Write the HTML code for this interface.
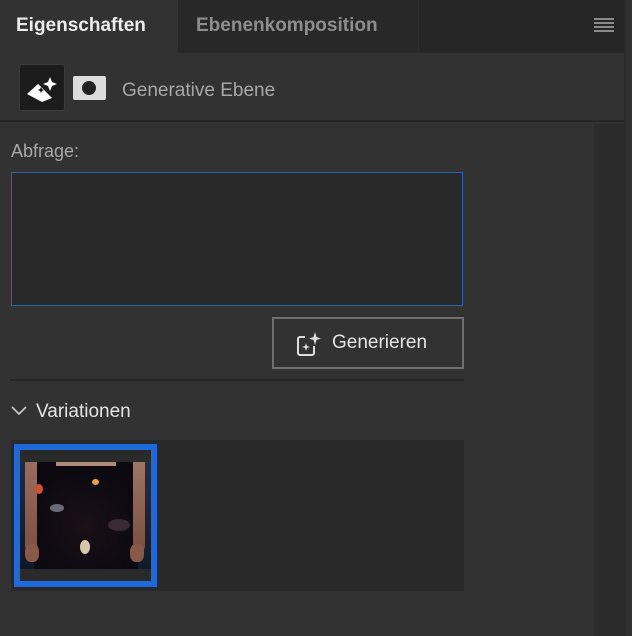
<!DOCTYPE html>
<html><head><style>
*{margin:0;padding:0;box-sizing:border-box}
body{width:632px;height:636px;background:#323232;position:relative;overflow:hidden;font-family:"Liberation Sans",sans-serif}
.a{position:absolute}
</style></head><body>
<div class="a" style="left:0;top:0;width:632px;height:53px;background:#262626"></div>
<div class="a" style="left:179px;top:0;width:239px;height:53px;background:#282828"></div>
<div class="a" style="left:0;top:0;width:178px;height:54px;background:#323232"></div>
<div class="a" style="left:16px;top:15px;font-size:19px;font-weight:bold;color:#ececec">Eigenschaften</div>
<div class="a" style="left:196px;top:15px;font-size:19px;font-weight:bold;color:#8e8e8e">Ebenenkomposition</div>
<div class="a" style="left:418px;top:0;width:1px;height:53px;background:#2e2e2e"></div>
<div class="a" style="left:594px;top:18px;width:20px;height:2px;background:#8a8a8a;box-shadow:0 4px #8a8a8a,0 8px #8a8a8a,0 12px #8a8a8a"></div>
<div class="a" style="left:19px;top:64px;width:46px;height:47px;background:#1c1c1c;border:1px solid #3c3c3c;border-radius:3px"></div>
<svg class="a" style="left:24px;top:72px" width="36" height="34" viewBox="0 0 36 34">
<path d="M3 22 L14 12 L22 20 Q16 23 18 30 Z" fill="#fff"/>
<path d="M14 12 L22 20 L28 26 L18 30" fill="#fff"/>
<path d="M26 5 L28 10 L33 12 L28 14 L26 19 L24 14 L19 12 L24 10Z" fill="#fff"/>
<path d="M17 15 L18 17 L20 18 L18 19 L17 21 L16 19 L14 18 L16 17Z" fill="#1c1c1c"/>
</svg>
<div class="a" style="left:73px;top:76px;width:33px;height:24px;background:#dcdcdc;border-radius:2px"></div>
<div class="a" style="left:82px;top:81px;width:14px;height:14px;background:#222;border-radius:50%"></div>
<div class="a" style="left:122px;top:80px;font-size:19px;color:#a8a8a8">Generative Ebene</div>
<div class="a" style="left:0;top:120px;width:632px;height:2px;background:#262626"></div>
<div class="a" style="left:594px;top:124px;width:30px;height:512px;background:#2b2b2b"></div>
<div class="a" style="left:624px;top:0;width:8px;height:636px;background:#303030;border-left:1px solid #262626"></div>
<div class="a" style="left:11px;top:141px;font-size:18px;color:#a8a8a8">Abfrage:</div>
<div class="a" style="left:11px;top:172px;width:452px;height:134px;background:#292929;border:1px solid #2d62b6"></div>
<div class="a" style="left:272px;top:317px;width:192px;height:52px;border:2px solid #707070"></div>
<svg class="a" style="left:296px;top:331px" width="26" height="26" viewBox="0 0 26 26">
<path d="M9 6 H4 a2 2 0 0 0-2 2 V22 a2 2 0 0 0 2 2 H16 a2 2 0 0 0 2-2 V15" fill="none" stroke="#ddd" stroke-width="2"/>
<path d="M19 1 L20.5 6 L25 7.5 L20.5 9 L19 14 L17.5 9 L13 7.5 L17.5 6Z" fill="#ddd"/>
<path d="M10 12 L11 15 L14 16 L11 17 L10 20 L9 17 L6 16 L9 15Z" fill="#ddd"/>
</svg>
<div class="a" style="left:332px;top:332px;font-size:19px;color:#e4e4e4">Generieren</div>
<div class="a" style="left:10px;top:379px;width:454px;height:2px;background:#262626"></div>
<svg class="a" style="left:11px;top:404px" width="16" height="12"><path d="M1 3 L8 10 L15 3" fill="none" stroke="#ccc" stroke-width="1.6"/></svg>
<div class="a" style="left:36px;top:401px;font-size:19px;color:#e4e4e4">Variationen</div>
<div class="a" style="left:11px;top:440px;width:453px;height:151px;background:#292929"></div>
<div class="a" style="left:14px;top:444px;width:143px;height:143px;border:6px solid #1d6ad8;background:#2a2a2a"></div>
<div class="a" style="left:20px;top:462px;width:131px;height:107px;background:radial-gradient(circle at 50% 60%,#1a1018,#0c0a10 60%);overflow:hidden">
<div class="a" style="left:0;top:0;width:14px;height:107px;background:linear-gradient(#1e2c44,#101828)"></div>
<div class="a" style="left:118px;top:0;width:13px;height:107px;background:linear-gradient(#20304a,#121a2a)"></div>
<div class="a" style="left:5px;top:-5px;width:12px;height:95px;background:linear-gradient(#9a7060,#7a5040);border-radius:6px"></div>
<div class="a" style="left:113px;top:-5px;width:12px;height:95px;background:linear-gradient(#a07868,#7a5040);border-radius:6px"></div>
<div class="a" style="left:5px;top:82px;width:14px;height:18px;background:#8a5a48;border-radius:40%"></div>
<div class="a" style="left:110px;top:82px;width:14px;height:18px;background:#8a5a48;border-radius:40%"></div>
<div class="a" style="left:36px;top:0;width:60px;height:4px;background:#b08a78"></div>
<div class="a" style="left:72px;top:17px;width:7px;height:6px;background:#e8a040;border-radius:50%"></div>
<div class="a" style="left:15px;top:22px;width:8px;height:10px;background:#d05030;border-radius:50%"></div>
<div class="a" style="left:30px;top:42px;width:14px;height:8px;background:#6a6a7a;border-radius:50%"></div>
<div class="a" style="left:60px;top:78px;width:10px;height:14px;background:#d8c8a8;border-radius:50%"></div>
<div class="a" style="left:88px;top:57px;width:22px;height:12px;background:#3a2a35;border-radius:50%"></div>
</div>
</body></html>
